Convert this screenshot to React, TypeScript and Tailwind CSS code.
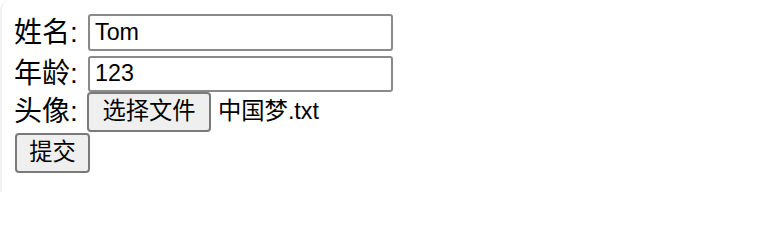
import React, { useState } from 'react';

const font = "font-['Liberation_Sans','Noto_Sans_CJK_SC',sans-serif]";

export default function App() {
    const [name, setName] = useState('Tom');
    const [age, setAge] = useState('123');

    return (
        <div className={`w-[759px] h-[206px] bg-white text-black ${font}`}>
            <div className="h-[192px] border-l-2 border-[#f2f2f2] rounded-tl-[10px] pl-[12px] pt-[14px]">
                <form className="flex flex-col items-start" onSubmit={(e) => e.preventDefault()}>
                    {/* 姓名 */}
                    <div className="flex items-center h-[37px]">
                        <span className="text-[28px] leading-none w-[74px]">姓名:</span>
                        <input
                            value={name}
                            onChange={(e) => setName(e.target.value)}
                            className="w-[305px] h-[37px] px-[5px] text-[23.3px] border-2 border-[#8a8a8a] rounded-[3px] outline-none"
                        />
                    </div>

                    {/* 年龄 */}
                    <div className="flex items-center h-[37px] mt-[4px]">
                        <span className="text-[28px] leading-none w-[74px]">年龄:</span>
                        <input
                            value={age}
                            onChange={(e) => setAge(e.target.value)}
                            className="w-[305px] h-[36px] px-[5px] text-[23.3px] border-2 border-[#8a8a8a] rounded-[3px] outline-none"
                        />
                    </div>

                    {/* 头像 */}
                    <div className="flex items-center h-[40px]">
                        <span className="text-[28px] leading-none w-[73px]">头像:</span>
                        <button
                            type="button"
                            className="w-[124px] h-[40px] text-[23.3px] bg-[#efefef] border-2 border-[#7a7a7a] rounded-[4px] leading-none"
                        >
                            选择文件
                        </button>
                        <span className="ml-[7px] text-[23.3px] leading-none">中国梦.txt</span>
                    </div>

                    {/* 提交 */}
                    <button
                        type="submit"
                        className="mt-[1px] ml-[1px] w-[75px] h-[40px] text-[23.3px] bg-[#efefef] border-2 border-[#7a7a7a] rounded-[4px] leading-none"
                    >
                        提交
                    </button>
                </form>
            </div>
        </div>
    );
}
